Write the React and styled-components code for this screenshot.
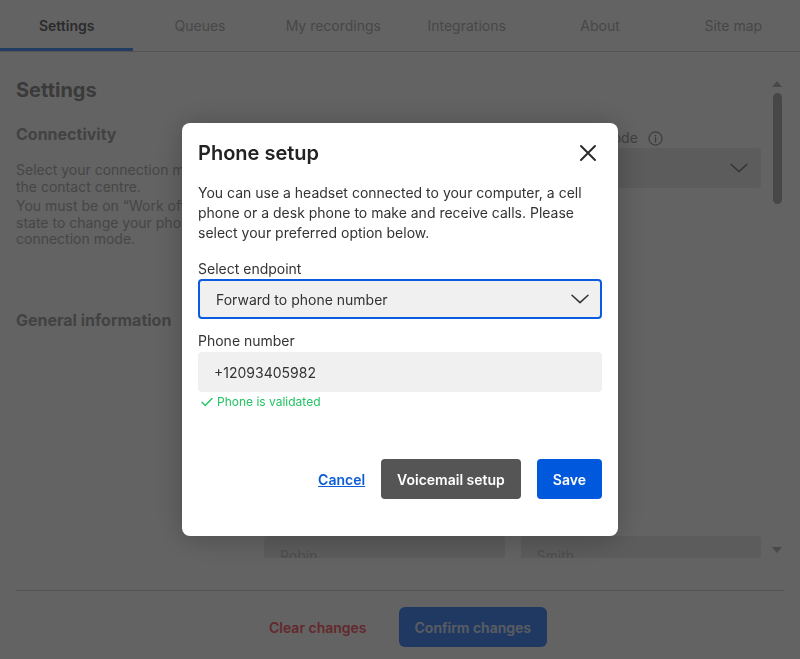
import React from 'react';
import styled, { createGlobalStyle } from 'styled-components';

const GlobalStyle = createGlobalStyle`
  html, body {
    margin: 0;
    height: 100%;
  }
  body {
    font-family: Inter, "Noto Sans", sans-serif;
    background: #fff;
    overflow: hidden;
  }
  #root {
    height: 100%;
  }
  * {
    box-sizing: border-box;
  }
`;

const tabs = ['Settings', 'Queues', 'My recordings', 'Integrations', 'About', 'Site map'];

const Chevron = ({ color = '#333' }) => (
  <svg width='18' height='10' viewBox='0 0 18 10' fill='none'>
    <path d='M1 1.2L9 8.6L17 1.2' stroke={color} strokeWidth='1.5' strokeLinecap='round' strokeLinejoin='round' />
  </svg>
);

const InfoIcon = () => (
  <svg width='15' height='15' viewBox='0 0 16 16' fill='none'>
    <circle cx='8' cy='8' r='7' stroke='#9a9a9a' strokeWidth='1.3' />
    <path d='M8 7.2V11.6' stroke='#9a9a9a' strokeWidth='1.4' strokeLinecap='round' />
    <circle cx='8' cy='4.9' r='0.9' fill='#9a9a9a' />
  </svg>
);

const CloseIcon = () => (
  <svg width='24' height='24' viewBox='0 0 24 24' fill='none'>
    <path d='M5 5L19 19M19 5L5 19' stroke='#2b2b2b' strokeWidth='2' strokeLinecap='round' />
  </svg>
);

const CheckIcon = () => (
  <svg width='12' height='10' viewBox='0 0 12 10' fill='none'>
    <path d='M1 5.2L4.3 8.4L11 1.4' stroke='#22c463' strokeWidth='1.4' strokeLinecap='round' strokeLinejoin='round' />
  </svg>
);

const App = () => {
  return (
    <>
      <GlobalStyle />
      <Page>
        <TabBar>
          {tabs.map((t, i) => (
            <Tab key={t} $active={i === 0}>{t}</Tab>
          ))}
        </TabBar>

        <Body>
          <Content>
            <PageTitle>Settings</PageTitle>

            <Section $top={18}>
              <div>
                <SectionHeading>Connectivity</SectionHeading>
                <Note $top={16}>Select your connection mode with the contact centre.</Note>
                <Note $top={3}>You must be on “Work offline” state to change your phone connection mode.</Note>
              </div>
              <FieldGrid>
                <Field>
                  <FieldLabel>Endpoint</FieldLabel>
                  <SelectBox>
                    Softphone
                    <Chevron color='#8a8a8a' />
                  </SelectBox>
                </Field>
                <Field>
                  <FieldLabel>
                    Connection mode
                    <InfoIcon />
                  </FieldLabel>
                  <SelectBox>
                    <span />
                    <Chevron color='#8a8a8a' />
                  </SelectBox>
                </Field>
              </FieldGrid>
            </Section>

            <Section $top={60}>
              <div>
                <SectionHeading>General information</SectionHeading>
              </div>
              <FieldGrid>
                <Field>
                  <FieldLabel>Username</FieldLabel>
                  <TextBox>robin.smith</TextBox>
                </Field>
                <span />
                <Field>
                  <FieldLabel>Email</FieldLabel>
                  <TextBox>robin.smith@example.com</TextBox>
                </Field>
                <span />
                <Field $top={52}>
                  <FieldLabel>First name</FieldLabel>
                  <TextBox>Robin</TextBox>
                </Field>
                <Field $top={52}>
                  <FieldLabel>Last name</FieldLabel>
                  <TextBox>Smith</TextBox>
                </Field>
              </FieldGrid>
            </Section>
          </Content>

          <ScrollRail>
            <Arrow $dir='up' />
            <Thumb />
            <RailSpacer />
            <Arrow $dir='down' />
          </ScrollRail>
        </Body>

        <Footer>
          <FooterInner>
            <ClearButton>Clear changes</ClearButton>
            <ConfirmButton>Confirm changes</ConfirmButton>
          </FooterInner>
        </Footer>
      </Page>

      <Overlay>
        <Modal>
          <ModalHeader>
            <ModalTitle>Phone setup</ModalTitle>
            <CloseButton aria-label='Close'>
              <CloseIcon />
            </CloseButton>
          </ModalHeader>
          <ModalText>
            You can use a headset connected to your computer, a cell phone or a desk phone to make and receive calls. Please select your preferred option below.
          </ModalText>

          <InputLabel $top={16}>Select endpoint</InputLabel>
          <EndpointSelect>
            Forward to phone number
            <Chevron />
          </EndpointSelect>

          <InputLabel $top={12}>Phone number</InputLabel>
          <PhoneInput>+12093405982</PhoneInput>
          <Validated>
            <CheckIcon />
            Phone is validated
          </Validated>

          <ModalActions>
            <LinkButton>Cancel</LinkButton>
            <SolidButton $variant='dark'>Voicemail setup</SolidButton>
            <SolidButton $variant='primary'>Save</SolidButton>
          </ModalActions>
        </Modal>
      </Overlay>
    </>
  );
};

const Page = styled.div`
  height: 100vh;
  display: flex;
  flex-direction: column;
  background: #fff;
`;

const TabBar = styled.nav`
  display: grid;
  grid-template-columns: repeat(6, 1fr);
  height: 52px;
  border-bottom: 1px solid #d8d8d8;
`;

const Tab = styled.div`
  display: flex;
  align-items: center;
  justify-content: center;
  font-size: 14px;
  font-weight: ${(p) => (p.$active ? 600 : 400)};
  color: ${(p) => (p.$active ? '#6f6f6f' : '#b8b8b8')};
  box-shadow: ${(p) => (p.$active ? 'inset 0 -3px 0 #5a9cff' : 'none')};
`;

const Body = styled.div`
  flex: 1;
  min-height: 0;
  display: flex;
  padding: 24px 15px 0 16px;
`;

const Content = styled.div`
  flex: 1;
  overflow: hidden;
`;

const PageTitle = styled.h1`
  margin: 0;
  font-size: 20px;
  line-height: 28px;
  font-weight: 700;
  color: #979797;
`;

const Section = styled.section`
  display: grid;
  grid-template-columns: 232px 1fr;
  column-gap: 16px;
  margin-top: ${(p) => p.$top}px;
`;

const SectionHeading = styled.h2`
  margin: 0;
  font-size: 16px;
  line-height: 24px;
  font-weight: 700;
  color: #aaaaaa;
`;

const Note = styled.p`
  margin: ${(p) => p.$top}px 0 0;
  font-size: 14px;
  line-height: 16.5px;
  color: #b4b4b4;
`;

const FieldGrid = styled.div`
  display: grid;
  grid-template-columns: 1fr 1fr;
  gap: 16px;
  padding-top: 7px;
  align-content: start;
`;

const Field = styled.div`
  display: flex;
  flex-direction: column;
  gap: 1px;
  margin-top: ${(p) => p.$top || 0}px;
`;

const FieldLabel = styled.label`
  display: flex;
  align-items: center;
  gap: 10px;
  font-size: 14px;
  line-height: 18px;
  color: #a6a6a6;
`;

const SelectBox = styled.div`
  height: 40px;
  display: flex;
  align-items: center;
  justify-content: space-between;
  padding: 0 13px 0 16px;
  background: #ececec;
  border-radius: 4px;
  font-size: 14px;
  color: #c8c8c8;
`;

const TextBox = styled.div`
  height: 40px;
  display: flex;
  align-items: center;
  padding: 0 16px;
  background: #ececec;
  border-radius: 4px;
  font-size: 14px;
  color: #c4c4c4;
`;

const ScrollRail = styled.div`
  width: 16px;
  margin-left: 8px;
  display: flex;
  flex-direction: column;
  align-items: center;
`;

const Arrow = styled.div`
  height: 16px;
  width: 16px;
  display: flex;
  align-items: center;
  justify-content: center;
  &::before {
    content: '';
    width: 0;
    height: 0;
    border-left: 5px solid transparent;
    border-right: 5px solid transparent;
    ${(p) => (p.$dir === 'up' ? 'border-bottom: 6px solid #bdbdbd;' : 'border-top: 6px solid #bdbdbd;')}
  }
`;

const Thumb = styled.div`
  width: 9px;
  height: 111px;
  margin-top: 1px;
  border-radius: 5px;
  background: #b8b8b8;
`;

const RailSpacer = styled.div`
  flex: 1;
`;

const Footer = styled.footer`
  margin: 0 16px;
  padding-top: 32px;
`;

const FooterInner = styled.div`
  border-top: 1px solid #d8d8d8;
  padding: 16px 0 12px;
  display: flex;
  justify-content: center;
  gap: 16px;
`;

const ClearButton = styled.button`
  height: 40px;
  padding: 0 16px;
  border: none;
  background: none;
  font-family: inherit;
  font-size: 14px;
  font-weight: 600;
  color: #ff6873;
`;

const ConfirmButton = styled.button`
  height: 40px;
  padding: 0 16px;
  border: none;
  border-radius: 6px;
  background: #5394ff;
  font-family: inherit;
  font-size: 14px;
  font-weight: 600;
  color: #e8eefa;
`;

const Overlay = styled.div`
  position: fixed;
  inset: 0;
  background: rgba(0, 0, 0, 0.61);
  display: flex;
  align-items: center;
  justify-content: center;
`;

const Modal = styled.div`
  width: 436px;
  background: #fff;
  border-radius: 8px;
  padding: 16px 16px 37px;
  box-shadow: 0 2px 30px rgba(0, 0, 0, 0.25);
  display: flex;
  flex-direction: column;
`;

const ModalHeader = styled.div`
  display: flex;
  align-items: center;
  justify-content: space-between;
  height: 28px;
`;

const ModalTitle = styled.h2`
  margin: 0;
  font-size: 20px;
  line-height: 28px;
  font-weight: 600;
  color: #222;
`;

const CloseButton = styled.button`
  width: 24px;
  height: 24px;
  margin-right: 2px;
  padding: 0;
  border: none;
  background: none;
  display: flex;
`;

const ModalText = styled.p`
  margin: 16px 0 0;
  font-size: 14px;
  line-height: 20px;
  color: #333;
`;

const InputLabel = styled.label`
  margin-top: ${(p) => p.$top}px;
  font-size: 14px;
  line-height: 20px;
  color: #333;
`;

const EndpointSelect = styled.div`
  height: 40px;
  display: flex;
  align-items: center;
  justify-content: space-between;
  padding: 0 11px 0 16px;
  border: 2px solid #0b5be0;
  border-radius: 4px;
  background: #f0f0f0;
  font-size: 14px;
  color: #333;
`;

const PhoneInput = styled.div`
  margin-top: 1px;
  height: 40px;
  display: flex;
  align-items: center;
  padding: 0 16px;
  border-radius: 4px;
  background: #f0f0f0;
  font-size: 14px;
  color: #333;
`;

const Validated = styled.div`
  margin-top: 2px;
  display: flex;
  align-items: center;
  gap: 4px;
  padding-left: 3px;
  font-size: 12px;
  line-height: 16px;
  color: #22c463;
`;

const ModalActions = styled.div`
  margin-top: 49px;
  display: flex;
  justify-content: flex-end;
  align-items: center;
  gap: 16px;
`;

const LinkButton = styled.button`
  padding: 0;
  border: none;
  background: none;
  font-family: inherit;
  font-size: 14px;
  font-weight: 600;
  color: #0b5cd6;
  text-decoration: underline;
`;

const SolidButton = styled.button`
  height: 40px;
  padding: 0 16px;
  border: none;
  border-radius: 4px;
  background: ${(p) => (p.$variant === 'primary' ? '#0058dd' : '#555')};
  font-family: inherit;
  font-size: 14px;
  font-weight: 600;
  color: #fff;
`;

export default App;
